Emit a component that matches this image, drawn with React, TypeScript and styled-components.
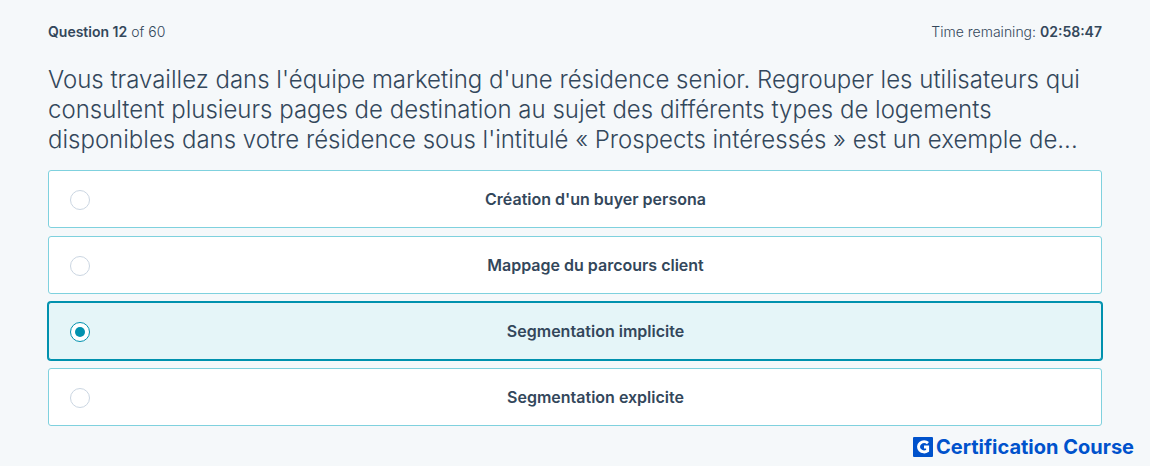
import React, { useState } from "react";
import styled, { createGlobalStyle } from "styled-components";

const GlobalStyle = createGlobalStyle`
  *, *::before, *::after { box-sizing: border-box; }
  body {
    margin: 0;
    background: #f5f8fa;
    color: #33475b;
    font-family: Inter, "Liberation Sans", sans-serif;
  }
`;

const Page = styled.main`
  padding: 24px 48px 0;
`;

const TopBar = styled.header`
  display: flex;
  justify-content: space-between;
  font-size: 14px;
  line-height: 16px;
  font-weight: 300;
`;

const Strong = styled.strong`
  font-weight: 600;
`;

const Quiz = styled.fieldset`
  min-width: 0;
  margin: 25px 0 0;
  padding: 0;
  border: 0;
`;

const Prompt = styled.legend`
  padding: 0;
  margin-bottom: 15px;
  font-size: 24px;
  line-height: 30px;
  font-weight: 300;
`;

const Options = styled.div`
  display: grid;
  gap: 8px;
`;

const Option = styled.label<{ $selected: boolean }>`
  display: flex;
  align-items: center;
  height: 58px;
  padding-left: 21px;
  border: 1px solid ${(p) => (p.$selected ? "#0091ae" : "#7fd1de")};
  border-radius: 3px;
  background: ${(p) => (p.$selected ? "#e5f5f8" : "#ffffff")};
  box-shadow: ${(p) => (p.$selected ? "0 0 0 1px #0091ae" : "none")};
  cursor: pointer;
`;

const Radio = styled.input`
  appearance: none;
  flex: none;
  display: grid;
  place-items: center;
  width: 20px;
  height: 20px;
  margin: 2px 0 0;
  border: 1px solid #cbd6e2;
  border-radius: 50%;
  background: #ffffff;

  &:checked {
    border-color: #0091ae;
  }

  &:checked::before {
    content: "";
    width: 10px;
    height: 10px;
    border-radius: 50%;
    background: #0091ae;
  }
`;

const OptionText = styled.span`
  flex: 1;
  text-align: center;
  font-size: 16px;
  line-height: 24px;
  font-weight: 600;
`;

const Brand = styled.footer`
  display: flex;
  justify-content: flex-end;
  align-items: center;
  gap: 3px;
  padding: 10px 16px 0 0;
  margin-right: -48px;
  color: #0052cc;
  font-size: 20px;
  line-height: 22px;
  font-weight: 700;
`;

const answers = [
  "Création d'un buyer persona",
  "Mappage du parcours client",
  "Segmentation implicite",
  "Segmentation explicite",
];

function BrandMark() {
  return (
    <svg width="20" height="20" viewBox="0 0 20 20" aria-hidden="true">
      <rect width="20" height="20" rx="1" fill="#0052cc" />
      <path
        d="M15 6.1A5.6 5.1 0 1 0 14.6 13.8V10H11"
        fill="none"
        stroke="#ffffff"
        strokeWidth="3"
      />
    </svg>
  );
}

export default function App() {
  const [selected, setSelected] = useState(2);
  return (
    <>
      <GlobalStyle />
      <Page>
        <TopBar>
          <span>
            <Strong>Question 12</Strong> of 60
          </span>
          <span>
            Time remaining: <Strong>02:58:47</Strong>
          </span>
        </TopBar>
        <Quiz>
          <Prompt>
            Vous travaillez dans l'équipe marketing d'une résidence senior. Regrouper les
            utilisateurs qui consultent plusieurs pages de destination au sujet des différents
            types de logements disponibles dans votre résidence sous l'intitulé « Prospects
            intéressés » est un exemple de...
          </Prompt>
          <Options>
            {answers.map((answer, i) => (
              <Option key={answer} $selected={i === selected}>
                <Radio
                  type="radio"
                  name="answer"
                  checked={i === selected}
                  onChange={() => setSelected(i)}
                />
                <OptionText>{answer}</OptionText>
              </Option>
            ))}
          </Options>
        </Quiz>
        <Brand>
          <BrandMark />
          <span>Certification Course</span>
        </Brand>
      </Page>
    </>
  );
}
